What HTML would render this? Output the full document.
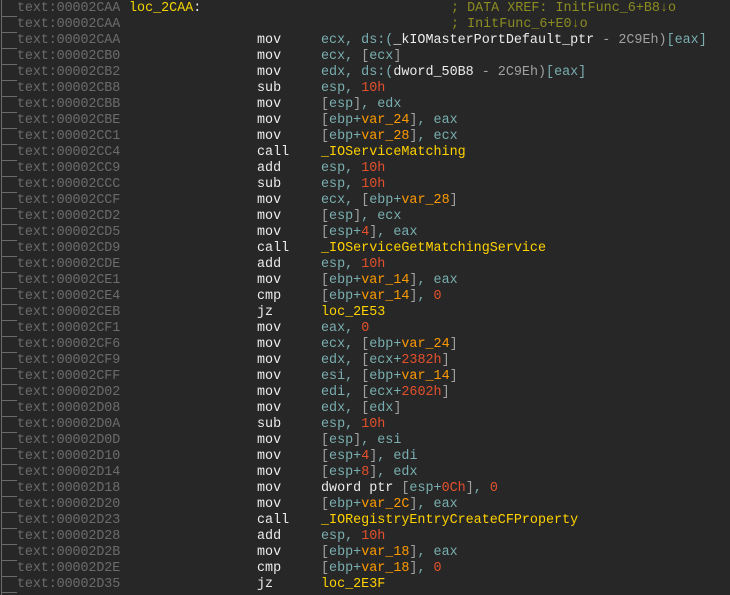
<html><head><style>
body{margin:0;background:#272727;width:730px;height:595px;overflow:hidden;font-family:"Liberation Mono",monospace;font-size:13.4px;}
.r{position:absolute;left:0;height:16px;width:730px;white-space:pre;line-height:16px}
.r:before{content:"";position:absolute;left:1px;top:15px;width:16px;height:1px;background:#6a6a6a}
.vl{position:absolute;left:1px;top:0;width:1px;height:595px;background:#6a6a6a}
.a{position:absolute;left:17px;color:#6b6b6b;letter-spacing:-0.1px}
.l{position:absolute;left:129px;color:#f2d400}
.m{position:absolute;left:257px;color:#ececec}
.o{position:absolute;left:321px;color:#7aaeb0}
.c{position:absolute;left:451px;color:#8c8c22}
.p{color:#a0a0a0}.n{color:#e4502c}.v{color:#ff9a00}.y{color:#ffd200}.w{color:#ececec}
</style></head><body><div class="vl"></div>
<div class="r" style="top:1px"><span class="a">text:00002CAA</span><span class="l">loc_2CAA<span class="w">:</span></span><span class="c">; DATA XREF: InitFunc_6+B8↓o</span></div>
<div class="r" style="top:17px"><span class="a">text:00002CAA</span><span class="c">; InitFunc_6+E0↓o</span></div>
<div class="r" style="top:33px"><span class="a">text:00002CAA</span><span class="m">mov</span><span class="o">ecx, ds:(<span class="w">_kIOMasterPortDefault_ptr</span> <span class="p">- 2C9Eh)</span>[eax]</span></div>
<div class="r" style="top:49px"><span class="a">text:00002CB0</span><span class="m">mov</span><span class="o">ecx, <span class="p">[</span>ecx<span class="p">]</span></span></div>
<div class="r" style="top:65px"><span class="a">text:00002CB2</span><span class="m">mov</span><span class="o">edx, ds:(<span class="w">dword_50B8</span> <span class="p">- 2C9Eh)</span>[eax]</span></div>
<div class="r" style="top:81px"><span class="a">text:00002CB8</span><span class="m">sub</span><span class="o">esp, <span class="n">10h</span></span></div>
<div class="r" style="top:97px"><span class="a">text:00002CBB</span><span class="m">mov</span><span class="o"><span class="p">[</span>esp<span class="p">]</span>, edx</span></div>
<div class="r" style="top:113px"><span class="a">text:00002CBE</span><span class="m">mov</span><span class="o"><span class="p">[</span>ebp+<span class="v">var_24</span><span class="p">]</span>, eax</span></div>
<div class="r" style="top:129px"><span class="a">text:00002CC1</span><span class="m">mov</span><span class="o"><span class="p">[</span>ebp+<span class="v">var_28</span><span class="p">]</span>, ecx</span></div>
<div class="r" style="top:145px"><span class="a">text:00002CC4</span><span class="m">call</span><span class="o"><span class="y">_IOServiceMatching</span></span></div>
<div class="r" style="top:161px"><span class="a">text:00002CC9</span><span class="m">add</span><span class="o">esp, <span class="n">10h</span></span></div>
<div class="r" style="top:177px"><span class="a">text:00002CCC</span><span class="m">sub</span><span class="o">esp, <span class="n">10h</span></span></div>
<div class="r" style="top:193px"><span class="a">text:00002CCF</span><span class="m">mov</span><span class="o">ecx, <span class="p">[</span>ebp+<span class="v">var_28</span><span class="p">]</span></span></div>
<div class="r" style="top:209px"><span class="a">text:00002CD2</span><span class="m">mov</span><span class="o"><span class="p">[</span>esp<span class="p">]</span>, ecx</span></div>
<div class="r" style="top:225px"><span class="a">text:00002CD5</span><span class="m">mov</span><span class="o"><span class="p">[</span>esp+<span class="n">4</span><span class="p">]</span>, eax</span></div>
<div class="r" style="top:241px"><span class="a">text:00002CD9</span><span class="m">call</span><span class="o"><span class="y">_IOServiceGetMatchingService</span></span></div>
<div class="r" style="top:257px"><span class="a">text:00002CDE</span><span class="m">add</span><span class="o">esp, <span class="n">10h</span></span></div>
<div class="r" style="top:273px"><span class="a">text:00002CE1</span><span class="m">mov</span><span class="o"><span class="p">[</span>ebp+<span class="v">var_14</span><span class="p">]</span>, eax</span></div>
<div class="r" style="top:289px"><span class="a">text:00002CE4</span><span class="m">cmp</span><span class="o"><span class="p">[</span>ebp+<span class="v">var_14</span><span class="p">]</span>, <span class="n">0</span></span></div>
<div class="r" style="top:305px"><span class="a">text:00002CEB</span><span class="m">jz</span><span class="o"><span class="y">loc_2E53</span></span></div>
<div class="r" style="top:321px"><span class="a">text:00002CF1</span><span class="m">mov</span><span class="o">eax, <span class="n">0</span></span></div>
<div class="r" style="top:337px"><span class="a">text:00002CF6</span><span class="m">mov</span><span class="o">ecx, <span class="p">[</span>ebp+<span class="v">var_24</span><span class="p">]</span></span></div>
<div class="r" style="top:353px"><span class="a">text:00002CF9</span><span class="m">mov</span><span class="o">edx, <span class="p">[</span>ecx+<span class="n">2382h</span><span class="p">]</span></span></div>
<div class="r" style="top:369px"><span class="a">text:00002CFF</span><span class="m">mov</span><span class="o">esi, <span class="p">[</span>ebp+<span class="v">var_14</span><span class="p">]</span></span></div>
<div class="r" style="top:385px"><span class="a">text:00002D02</span><span class="m">mov</span><span class="o">edi, <span class="p">[</span>ecx+<span class="n">2602h</span><span class="p">]</span></span></div>
<div class="r" style="top:401px"><span class="a">text:00002D08</span><span class="m">mov</span><span class="o">edx, <span class="p">[</span>edx<span class="p">]</span></span></div>
<div class="r" style="top:417px"><span class="a">text:00002D0A</span><span class="m">sub</span><span class="o">esp, <span class="n">10h</span></span></div>
<div class="r" style="top:433px"><span class="a">text:00002D0D</span><span class="m">mov</span><span class="o"><span class="p">[</span>esp<span class="p">]</span>, esi</span></div>
<div class="r" style="top:449px"><span class="a">text:00002D10</span><span class="m">mov</span><span class="o"><span class="p">[</span>esp+<span class="n">4</span><span class="p">]</span>, edi</span></div>
<div class="r" style="top:465px"><span class="a">text:00002D14</span><span class="m">mov</span><span class="o"><span class="p">[</span>esp+<span class="n">8</span><span class="p">]</span>, edx</span></div>
<div class="r" style="top:481px"><span class="a">text:00002D18</span><span class="m">mov</span><span class="o"><span class="w">dword ptr</span> <span class="p">[</span>esp+<span class="n">0Ch</span><span class="p">]</span>, <span class="n">0</span></span></div>
<div class="r" style="top:497px"><span class="a">text:00002D20</span><span class="m">mov</span><span class="o"><span class="p">[</span>ebp+<span class="v">var_2C</span><span class="p">]</span>, eax</span></div>
<div class="r" style="top:513px"><span class="a">text:00002D23</span><span class="m">call</span><span class="o"><span class="y">_IORegistryEntryCreateCFProperty</span></span></div>
<div class="r" style="top:529px"><span class="a">text:00002D28</span><span class="m">add</span><span class="o">esp, <span class="n">10h</span></span></div>
<div class="r" style="top:545px"><span class="a">text:00002D2B</span><span class="m">mov</span><span class="o"><span class="p">[</span>ebp+<span class="v">var_18</span><span class="p">]</span>, eax</span></div>
<div class="r" style="top:561px"><span class="a">text:00002D2E</span><span class="m">cmp</span><span class="o"><span class="p">[</span>ebp+<span class="v">var_18</span><span class="p">]</span>, <span class="n">0</span></span></div>
<div class="r" style="top:577px"><span class="a">text:00002D35</span><span class="m">jz</span><span class="o"><span class="y">loc_2E3F</span></span></div>
</body></html>
